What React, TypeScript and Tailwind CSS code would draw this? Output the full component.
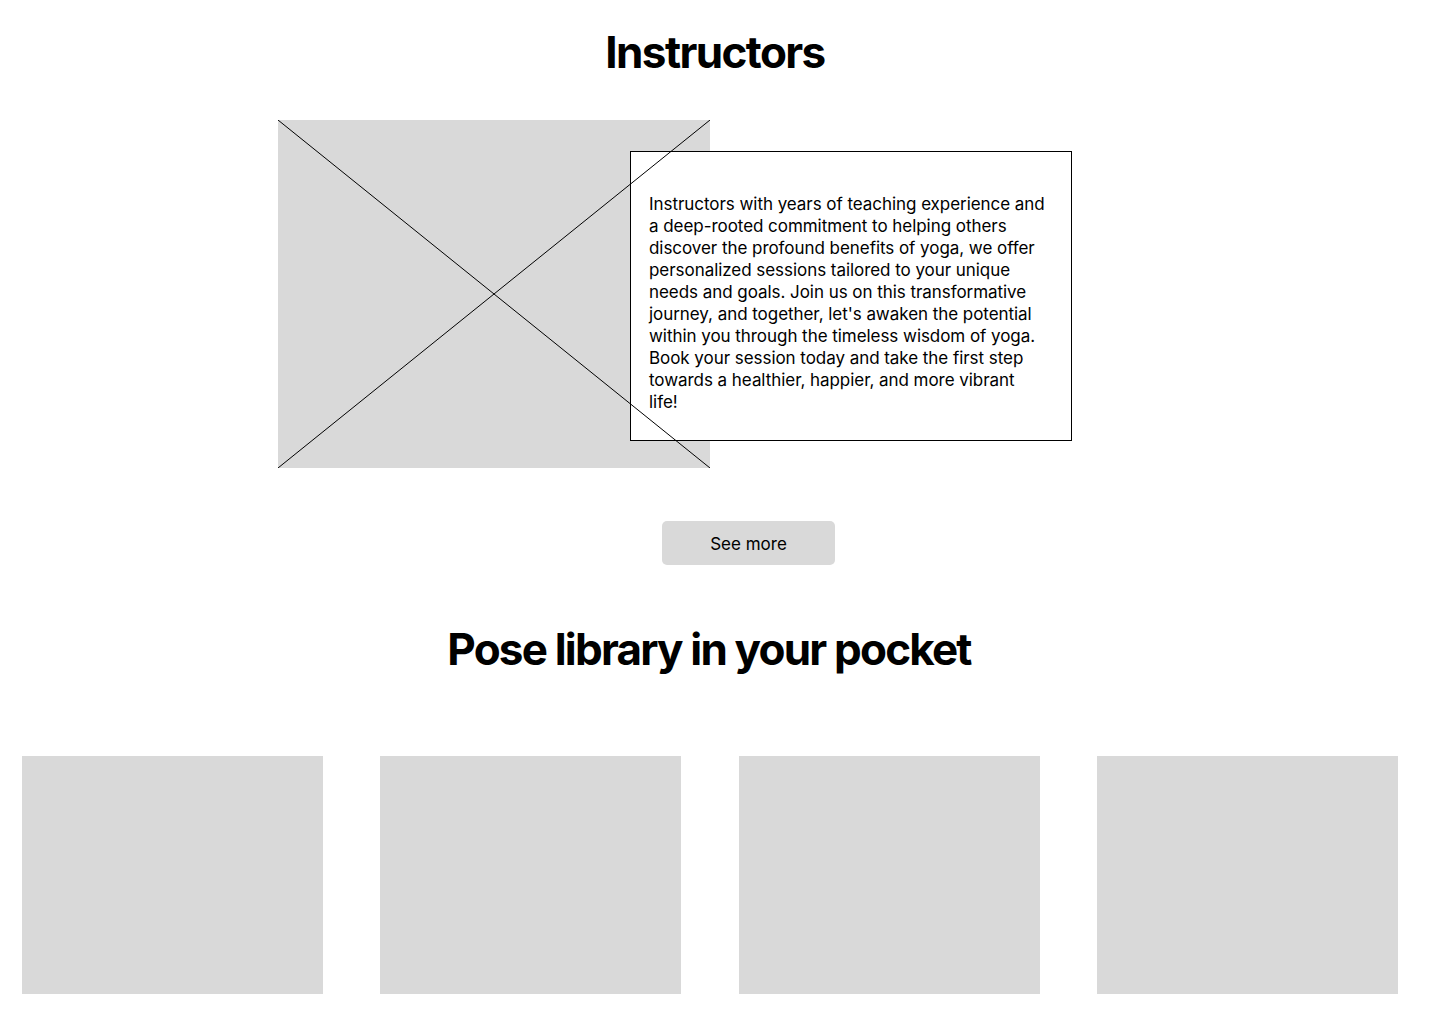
import React from 'react';

const bio = [
  'Instructors with years of teaching experience and',
  'a deep-rooted commitment to helping others',
  'discover the profound benefits of yoga, we offer',
  'personalized sessions tailored to your unique',
  'needs and goals. Join us on this transformative',
  "journey, and together, let's awaken the potential",
  'within you through the timeless wisdom of yoga.',
  'Book your session today and take the first step',
  'towards a healthier, happier, and more vibrant',
  'life!',
];

export default function App() {
  return (
    <div className="w-[1440px] h-[1024px] bg-white text-black font-['Inter',sans-serif] overflow-hidden">
      <h2 className="pt-[26px] text-center text-[44px] leading-[52px] font-bold tracking-[-1.6px] pr-[10px]">Instructors</h2>

      {/* image placeholder with the info card laid over its right edge */}
      <div className="relative flex items-start pl-[278px] mt-[42px]">
        <div className="w-[432px] h-[348px] shrink-0 bg-[#d9d9d9]" />
        <div className="ml-[-80px] mt-[31px] w-[442px] h-[290px] border border-black bg-white pl-[18px] pt-[41px] text-[17px] leading-[22px] tracking-[-0.05px]">
          {bio.map((line, i) => (
            <div key={i} className="whitespace-nowrap">{line}</div>
          ))}
        </div>
        <svg className="absolute left-[278px] top-0 w-[432px] h-[348px] pointer-events-none" viewBox="0 0 432 348" preserveAspectRatio="none">
          <line x1="0" y1="0" x2="432" y2="348" stroke="#000" strokeWidth="1" />
          <line x1="432" y1="0" x2="0" y2="348" stroke="#000" strokeWidth="1" />
        </svg>
      </div>

      <button className="block ml-[662px] mt-[53px] w-[173px] h-[44px] pt-[3px] rounded-[5px] bg-[#d9d9d9] text-[17px]">
        See more
      </button>

      <h2 className="mt-[58px] text-center text-[44px] leading-[52px] font-bold tracking-[-1.8px] pr-[22px]">
        Pose library in your pocket
      </h2>

      <div className="flex justify-between pl-[22px] pr-[42px] mt-[81px]">
        {[0, 1, 2, 3].map((i) => (
          <div key={i} className="w-[301px] h-[238px] bg-[#d9d9d9]" />
        ))}
      </div>
    </div>
  );
}
